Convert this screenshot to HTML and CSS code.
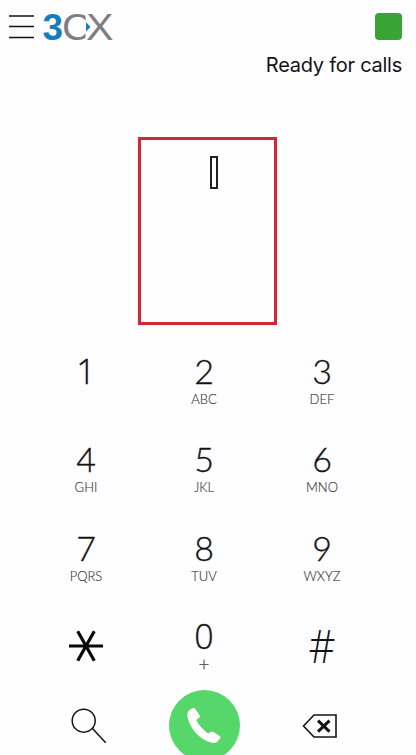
FILE: index.html
```html
<!DOCTYPE html>
<html lang="en">
<head>
<meta charset="utf-8">
<title>3CX</title>
<link rel="stylesheet" href="styles.css">
</head>
<body>
<main class="phone">
  <header class="header">
    <div class="brand">
      <svg class="menu" width="26" height="26" viewBox="0 0 26 26"><path d="M0 3H25M0 13.6H25M0 24.6H25"/></svg>
      <svg class="logo" width="72" height="34" viewBox="0 0 72 34">
        <text class="three" x="-0.5" y="29.800" textLength="20.500" lengthAdjust="spacingAndGlyphs">3</text>
        <svg width="42.500" height="34"><text class="cx" x="19" y="29.800" textLength="29" lengthAdjust="spacingAndGlyphs">C</text></svg>
        <text class="cx" x="43" y="30" textLength="27.500" lengthAdjust="spacingAndGlyphs">X</text>
        <path class="arrow" d="M43 12.300L47.500 17L43 21.500Z"/>
      </svg>
    </div>
    <span class="presence"></span>
  </header>
  <p class="status">Ready for calls</p>
  <section class="display"><span class="caret"></span></section>
  <section class="keypad">
    <button class="key one">1</button>
    <button class="key">2<small>ABC</small></button>
    <button class="key">3<small>DEF</small></button>
    <button class="key">4<small>GHI</small></button>
    <button class="key">5<small>JKL</small></button>
    <button class="key">6<small>MNO</small></button>
    <button class="key">7<small>PQRS</small></button>
    <button class="key">8<small>TUV</small></button>
    <button class="key">9<small>WXYZ</small></button>
    <button class="key symbol"><svg width="36" height="32" viewBox="0 0 36 32"><path class="star" d="M1 16H35M9.7 1.2L26.3 30.8M26.3 1.2L9.7 30.8"/></svg></button>
    <button class="key zero">0<small class="plus">+</small></button>
    <button class="key symbol"><svg width="36" height="38" viewBox="0 0 36 38"><text class="hash" x="4.500" y="32.500" textLength="27" lengthAdjust="spacingAndGlyphs">#</text></svg></button>
  </section>
  <footer class="actions">
    <svg class="search" width="38" height="38" viewBox="0 0 38 38"><circle cx="13.7" cy="13.7" r="11.5"/><path d="M22.3 21.3L35.7 35.8"/></svg>
    <button class="call"><svg width="36" height="38" viewBox="0 0 36 38"><path d="M3 3.600L6.400 1.200Q8 .2 9.200 1.700L13.600 8.200Q14.600 9.600 13.300 10.600L10.300 13Q12.200 17 15.200 20.300Q18.400 24 22.200 26.500L25.300 24.800Q26.400 24.200 27.500 25L33.700 29Q35.200 30.100 34.100 31.500L31.300 34.800Q29 36.700 25.200 35.600Q17 33.500 10.300 26.500Q3.800 19.500 1.700 11Q.4 6.300 3 3.600Z"/></svg></button>
    <svg class="erase" width="36" height="26" viewBox="0 0 36 26"><path d="M1.500 13L12 2H34V24H12Z"/><path class="cross" d="M16 7.600L27.500 18.700M27.500 7.600L16 18.700"/></svg>
  </footer>
</main>
</body>
</html>
```

FILE: styles.css
```css
* { box-sizing: border-box; }
body {
  margin: 0;
  background: #fefdff;
  color: #151217;
  font-family: Lato, sans-serif;
}
.phone {
  display: flex;
  flex-direction: column;
  height: 755px;
  overflow: hidden;
}
.header {
  flex: none;
  display: flex;
  justify-content: space-between;
  height: 50px;
  padding: 10px 14px 0 9px;
}
.brand { display: flex; }
.menu { margin: 3px 8px 0 0; stroke: #151217; stroke-width: 1.5; }
.logo { overflow: visible; }
.three { font: 700 37px "Liberation Sans", sans-serif; fill: #167dbd; }
.cx { font: 400 37px "Liberation Sans", sans-serif; fill: #817c86; }
.arrow { fill: #167dbd; }
.presence {
  width: 27px;
  height: 27px;
  margin-top: 3px;
  border-radius: 4px;
  background: #3aa335;
}
.status {
  flex: none;
  height: 30px;
  margin: 0 14px 0 0;
  font: 400 20px/30px Inter, sans-serif;
  letter-spacing: -.25px;
  text-align: right;
}
.display {
  flex: none;
  display: flex;
  justify-content: center;
  width: 139px;
  height: 188px;
  margin: 57px 0 0 138px;
  padding: 16px 0 0 13px;
  border: 3px solid #d32730;
}
.caret { width: 8px; height: 33px; border: 2px solid #242026; }
.keypad {
  flex: none;
  display: grid;
  grid-template-columns: repeat(3, 118px);
  grid-auto-rows: 88.300px;
  margin: 26px 0 0 27px;
}
.key {
  display: flex;
  flex-direction: column;
  align-items: center;
  padding: 0;
  border: 0;
  background: none;
  color: inherit;
  font: 300 34px/40px Lato, sans-serif;
  -webkit-text-stroke: .35px currentColor;
}
.key small {
  font: 300 13px/16px Lato, sans-serif;
  color: #3d3941;
  -webkit-text-stroke: .15px currentColor;
}
.key .plus { font-size: 19px; }
.one, .zero { font-family: "Open Sans", sans-serif; }
.symbol { padding-top: 14px; }
.star { stroke: #080709; stroke-width: 3.200; }
.hash { font: 300 47px "Open Sans", sans-serif; fill: #151217; }
.actions {
  flex: none;
  display: flex;
  height: 72px;
  margin-top: -14px;
  padding-left: 70px;
}
.search { margin: 17px 60.500px 0 0; fill: none; stroke: #151217; stroke-width: 1.500; }
.call {
  flex: none;
  display: flex;
  align-items: center;
  justify-content: center;
  width: 71px;
  height: 71px;
  padding: 0;
  border: 0;
  border-radius: 50%;
  background: #55d769;
}
.call svg { fill: #fff; }
.erase { margin: 23px 0 0 62px; fill: none; stroke: #151217; stroke-width: 1.600; }
.cross { stroke-width: 3; }
```
